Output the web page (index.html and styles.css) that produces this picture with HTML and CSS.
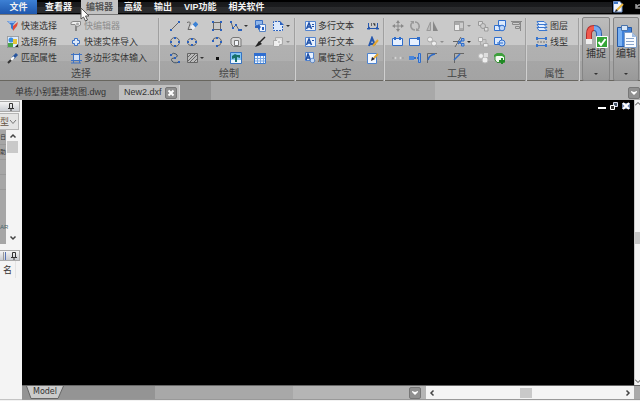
FILE: index.html
```html
<!DOCTYPE html>
<html lang="zh-CN">
<head>
<meta charset="utf-8">
<title>CAD</title>
<link rel="stylesheet" href="styles.css">
</head>
<body>
<nav class="menubar">
  <button class="menu file">文件</button>
  <button class="menu">查看器</button>
  <button class="menu current">编辑器</button>
  <button class="menu">高级</button>
  <button class="menu">输出</button>
  <button class="menu">VIP功能</button>
  <button class="menu">相关软件</button>
  <span class="quick">
    <button aria-label="编辑"><svg class="ic" viewBox="0 0 12 12"><path fill="#eef4ff" stroke="#6f8fc4" d="M1.500 .5H8L10 3V11H1.500z"/><path stroke="#3f78c8" stroke-width="2" d="M2 2H6"/><path stroke="#e9b53c" stroke-width="2" d="M11 3L5 9"/><path fill="#222" d="M4 8L6 10L3 11z"/></svg></button>
    <button aria-label="撤销"><svg class="ic" viewBox="0 0 12 12"><path fill="none" stroke="#999" stroke-width="1.500" d="M2 7Q4 3 8 4T11 9M2 3V7H6"/></svg></button>
  </span>
</nav>

<header class="ribbon">
  <section class="group">
    <div class="tools select">
      <button class="tool"><svg class="ic" viewBox="0 0 12 12"><path fill="#3a76cf" d="M0 1H9L6 5V10L4 8V5z"/><path fill="#8bb5ec" d="M1 1H8L7 3H2z"/><path fill="#e04a3a" d="M6 6L11 2L10 6L6 11z"/></svg>快速选择</button>
      <button class="tool off"><svg class="ic" viewBox="0 0 12 12"><path fill="#eee" stroke="#888" d="M1 2.500L3 1.500H10.500V5L7 7L5 4.500H1z"/><path stroke="#888" stroke-width="2" d="M6 6V11"/><circle cx="7.500" cy="4" r="1.500" fill="#aaa"/></svg>快编辑器</button>
      <button class="tool"><svg class="ic" viewBox="0 0 12 12"><path fill="#dcecff" stroke="#666" stroke-dasharray="1 1" d="M.5 .5H11.500V11.500H.5z"/><circle cx="4" cy="4" r="2.500" fill="#3b8de0"/><path fill="#4ca548" d="M1 7H6V11H1z"/><path fill="#e6c63c" d="M6 3H10V8H6z"/><path fill="#222" d="M8 11L11 8V11z"/></svg>选择所有</button>
      <button class="tool"><svg class="ic" viewBox="0 0 12 12"><path fill="#dbe8fa" stroke="#3e73c4" d="M4.500 4.500V2.500H7.500V4.500H9.500V7.500H7.500V9.500H4.500V7.500H2.500V4.500z"/></svg>快速实体导入</button>
      <button class="tool"><svg class="ic" viewBox="0 0 12 12"><path stroke="#27549d" stroke-width="3" d="M10 2L6 6"/><path stroke="#fff" stroke-width="2" d="M7 5L4 8"/><path stroke="#333" stroke-width="2" d="M4 8L1 11"/></svg>匹配属性</button>
      <button class="tool"><svg class="ic" viewBox="0 0 12 12"><path fill="#d5e3f7" stroke="#3e73c4" d="M3.500 2.500H9.500V8.500H3.500zM1 2.500H12M3.500 1V11M9.500 1V11M1 8.500H12M1 11H11"/></svg>多边形实体输入</button>
    </div>
    <h2>选择</h2>
  </section>

  <section class="group">
    <div class="tools draw">
      <button class="tool" aria-label="直线"><svg class="ic" viewBox="0 0 12 12"><path stroke="#666" d="M2 10L10 2"/><path fill="#2a61be" d="M1 9H3V11H1zM9 1H11V3H9z"/></svg></button>
      <button class="tool" aria-label="徒手画"><svg class="ic" viewBox="0 0 12 12"><path fill="none" stroke="#666" d="M1 2.500Q5 1 4 4T2 9.500H6"/><path stroke="#3b82d6" stroke-width="4" d="M11 3L8 6"/><path stroke="#eef0f5" stroke-width="4" d="M8 6L5.500 8.500"/></svg></button>
      <button class="tool" aria-label="矩形"><svg class="ic" viewBox="0 0 12 12"><path fill="none" stroke="#666" d="M2.500 2.500H9.500V9.500H2.500z"/><path fill="#2a61be" d="M1 1H3V3H1zM9 1H11V3H9zM1 9H3V11H1zM9 9H11V11H9z"/></svg></button>
      <button class="tool drop" aria-label="多段线"><svg class="ic" viewBox="0 0 12 12"><path fill="none" stroke="#666" d="M1 2L3 8L6 5L9 10H12"/><path fill="#2a61be" d="M0 1H2V3H0zM2 7H4V9H2zM5 4H7V6H5zM8 9H10V11H8zM10 9H12V11H10z"/></svg></button>
      <button class="tool" aria-label="块"><svg class="ic" viewBox="0 0 12 12"><path fill="#8fb6ea" stroke="#3b70c4" d="M1.500 .5H8.500V5.500H1.500z"/><path fill="#eef5ff" stroke="#5582c4" d="M5.500 4.500H11.500V11.500H5.500z"/><path fill="#2a61be" d="M1 6H4V4L7 7L4 10V8H1zM8 7H10V10H8z"/></svg></button>
      <button class="tool drop" aria-label="修剪框"><svg class="ic" viewBox="0 0 12 12"><path fill="#dce9fb" d="M1 2H9L11 5V11H1z"/><path fill="none" stroke="#2a61be" stroke-dasharray="2 1" d="M8 1.500H1.500V10.500H10.500V5"/><path fill="#2a61be" d="M8 1L12 5H8z"/></svg></button>

      <button class="tool" aria-label="圆"><svg class="ic" viewBox="0 0 12 12"><circle cx="6" cy="6" r="4.500" fill="none" stroke="#666"/><path fill="#2a61be" d="M5 1H7V3H5zM5 9H7V11H5zM1 5H3V7H1zM9 5H11V7H9z"/></svg></button>
      <button class="tool" aria-label="椭圆"><svg class="ic" viewBox="0 0 12 12"><ellipse cx="6" cy="6" rx="4.500" ry="3.500" fill="none" stroke="#666"/><path fill="#2a61be" d="M5 2H7V4H5zM5 8H7V10H5zM1 5H3V7H1zM9 5H11V7H9z"/></svg></button>
      <button class="tool" aria-label="圆弧"><svg class="ic" viewBox="0 0 12 12"><path fill="none" stroke="#666" d="M1.500 5.500Q2 1.500 6 1.500T10.500 6Q10 9.500 6 10"/><path fill="#2a61be" d="M1 4H3V6H1zM5 1H7V3H5zM9 5H11V7H9zM5 9H7V11H5z"/></svg></button>
      <button class="tool" aria-label="云线"><svg class="ic" viewBox="0 0 12 12"><path fill="#d8d8d8" stroke="#777" d="M1 5V3L3 1.500H9L11 3V10.500H3.500L1 8z"/><path fill="#f2f5fa" stroke="#777" d="M4.500 4.500H8.500V9.500H4.500z"/></svg></button>
      <button class="tool" aria-label="画刷"><svg class="ic" viewBox="0 0 12 12"><path stroke="#222" stroke-width="1.500" d="M11 1L5 7"/><path fill="#222" d="M5 5L8 8L4 10L1 11L3 8z"/></svg></button>
      <button class="tool drop off" aria-label="区域"><svg class="ic" viewBox="0 0 12 12"><path fill="#ddd" stroke="#aaa" d="M3.500 1.500H10.500V8.500H3.500z"/><path fill="#eee" stroke="#aaa" d="M1.500 4.500H7.500V10.500H1.500z"/><circle cx="7" cy="6" r="2" fill="#ccc" stroke="#fff"/></svg></button>

      <button class="tool" aria-label="样条曲线"><svg class="ic" viewBox="0 0 12 12"><path fill="none" stroke="#456" d="M2 3Q4 0 7 2T6 6Q1 6 3 9T10 10"/><path fill="#2a61be" d="M1 2H3V4H1zM5 5H7V7H5zM9 9H11V11H9z"/></svg></button>
      <button class="tool drop" aria-label="填充"><svg class="ic" viewBox="0 0 12 12"><path fill="#bbb" stroke="#666" d="M1.500 1.500H11.500V10.500H1.500z"/><path stroke="#666" d="M2 5L5 2M2 9L9 2M4 10L11 3M8 10L11 7"/></svg></button>
      <button class="tool" aria-label="点"><svg class="ic" viewBox="0 0 12 12"><path fill="#111" d="M5 5H8V8H5z"/></svg></button>
      <button class="tool" aria-label="图像"><svg class="ic" viewBox="0 0 12 12"><path fill="#84c5f3" stroke="#3673c2" d="M.5 .5H11.500V11.500H.5z"/><path fill="#eaf7ff" d="M1 8H11V11H1z"/><path fill="#15706a" d="M2 4L5 2L7 3L10 3L10 6L7 5V10H5V6L2 7z"/></svg></button>
      <button class="tool" aria-label="表格"><svg class="ic" viewBox="0 0 12 12"><path fill="#f0f7ff" stroke="#3c7bd0" d="M.5 1.500H11.500V11.500H.5z"/><path fill="#2f6ed0" d="M0 1H12V4H0z"/><path stroke="#79a7e4" d="M3.500 4V11M6.500 4V11M9.500 4V11M1 6.500H11M1 9H11"/></svg></button>
    </div>
    <h2>绘制</h2>
  </section>

  <section class="group">
    <div class="tools text">
      <button class="tool"><svg class="ic" viewBox="0 0 12 12"><path fill="#e9f1fd" stroke="#5585cf" d="M1.500 1.500H11.500V10.500H1.500z"/><path fill="none" stroke="#1d4fa8" stroke-width="1.500" d="M2.500 9L5 3L7.500 9M3.500 7H7"/><path stroke="#1d4fa8" d="M8 4.500H10M8 6.500H10"/></svg>多行文本</button>
      <button class="tool" aria-label="标注"><svg class="ic" viewBox="0 0 12 12"><path stroke="#2456ad" d="M1.500 3V9M10.500 3V9M0 8.500H12"/><path fill="#2456ad" d="M0 9.500L3 6.500V9.500zM12 9.500L9 6.500V9.500z"/><path stroke="#666" d="M4.500 3V6M6 3.500H8V6"/></svg></button>
      <button class="tool"><svg class="ic" viewBox="0 0 12 12"><path fill="#e9f1fd" stroke="#5585cf" d="M1.500 1.500H11.500V10.500H1.500z"/><path fill="none" stroke="#1d4fa8" stroke-width="1.500" d="M2.500 9L5 3L7.500 9M3.500 7H7"/><path stroke="#1d4fa8" d="M8 4.500H10"/></svg>单行文本</button>
      <button class="tool" aria-label="文字样式"><svg class="ic" viewBox="0 0 12 12"><path fill="none" stroke="#2456ad" stroke-width="2" d="M2 10L5 2L8 9M2 8H7"/><path stroke="#e4a52e" stroke-width="2" d="M11 4L6 10"/></svg></button>
      <button class="tool"><svg class="ic" viewBox="0 0 12 12"><path fill="#e9f1fd" stroke="#5585cf" d="M1.500 .5H9.500V8.500H1.500z"/><path fill="none" stroke="#1d4fa8" stroke-width="1.500" d="M2 8L4 2L6.500 8M3 6H6"/><circle cx="8.500" cy="8.500" r="2.200" fill="#c5daf6" stroke="#2f66bb" stroke-dasharray="1 .5"/></svg>属性定义</button>
      <button class="tool" aria-label="编辑文字"><svg class="ic" viewBox="0 0 12 12"><path fill="#f3f8ff" stroke="#4d83d0" d="M.5 1.500H9.500V11.500H.5z"/><path stroke="#e4a52e" stroke-width="2" d="M11 2L7 6"/><path fill="#223" d="M5 5L8 7L4 9z"/></svg></button>
    </div>
    <h2>文字</h2>
  </section>

  <section class="group">
    <div class="tools modify">
      <button class="tool" aria-label="移动"><svg class="ic" viewBox="0 0 12 12"><path stroke="#888" d="M6 2V10M2 6H10"/><path fill="#888" d="M6 0L8 3H4zM6 12L8 9H4zM0 6L3 4V8zM12 6L9 4V8z"/></svg></button>
      <button class="tool" aria-label="旋转"><svg class="ic" viewBox="0 0 12 12"><path fill="none" stroke="#999" stroke-width="1.500" d="M4 2Q1 4 2 7T6 10M8 10Q11 8 10 5T6 2"/><path fill="#999" d="M1 1H5V4zM11 11H7V8z"/></svg></button>
      <button class="tool" aria-label="镜像"><svg class="ic" viewBox="0 0 12 12"><path fill="#bbb" stroke="#999" d="M4.500 2V10.500H.8z"/><path fill="#888" d="M7 1L12 11H7z"/></svg></button>
      <button class="tool drop off" aria-label="缩放"><svg class="ic" viewBox="0 0 12 12"><path fill="#aaa" stroke="#999" d="M1.500 1.500H10.500V10.500H1.500z"/><path fill="#eee" d="M2 5H6V10H2z"/><path fill="#ccc" d="M7 3H10V8H7z"/></svg></button>
      <button class="tool" aria-label="分解"><svg class="ic" viewBox="0 0 12 12"><path fill="#ddd" stroke="#999" d="M1.500 1.500H5.500V5.500H1.500zM7.500 7.500H11V11H7.500z"/><circle cx="6" cy="6" r="2.500" fill="#ccc" stroke="#999"/></svg></button>
      <button class="tool" aria-label="组合"><svg class="ic" viewBox="0 0 12 12"><path fill="#dceafd" stroke="#2f6fce" d="M4.500 .5H11.500V6.500H4.500zM.5 5.500H6.500V10.500H.5z"/><circle cx="8" cy="8" r="2.800" fill="#bfd7f8" stroke="#2f6fce"/></svg></button>
      <button class="tool" aria-label="对齐"><svg class="ic" viewBox="0 0 12 12"><path fill="#ccc" stroke="#888" d="M1.500 2.500H8.500V4.500H1.500zM4.500 6.500H8.500V8.500H4.500z"/><path stroke="#888" d="M0 1.500H11M9.500 1V11"/></svg></button>

      <button class="tool" aria-label="打断"><svg class="ic" viewBox="0 0 12 12"><path fill="#e6f0ff" stroke="#2e6cca" d="M.5 2.500H10.500V9.500H.5z"/><path fill="#2e6cca" d="M2 1H4V4H2zM7 1H9V4H7z"/></svg></button>
      <button class="tool" aria-label="打断于点"><svg class="ic" viewBox="0 0 12 12"><path fill="#e6f0ff" stroke="#2e6cca" d="M.5 2.500H10.500V9.500H.5z"/><path fill="#2e6cca" d="M8 1H11V4H8z"/></svg></button>
      <button class="tool drop off" aria-label="复制"><svg class="ic" viewBox="0 0 12 12"><circle cx="4" cy="3.500" r="2.500" fill="#eee" stroke="#aaa"/><circle cx="8" cy="7.500" r="2.500" fill="#eee" stroke="#aaa"/><path stroke="#aaa" d="M9 9L12 12"/></svg></button>
      <button class="tool drop" aria-label="修剪"><svg class="ic" viewBox="0 0 12 12"><path stroke="#666" d="M2 11L8 1M0 5.500H5"/><path stroke="#2e6cca" stroke-width="1.500" d="M5 5L10 9M10 3L5 8"/><path fill="#8fb5ea" stroke="#2e6cca" d="M8.500 2.500H11V5H8.500zM8.500 7.500H11V10H8.500z"/></svg></button>
      <button class="tool" aria-label="阵列"><svg class="ic" viewBox="0 0 12 12"><path fill="#eee" stroke="#aaa" d="M1.500 1.500H5.500V5.500H1.500zM6.500 7.500H11V11H6.500z"/><path stroke="#aaa" fill="none" d="M6 3.500H9V7M3.500 6V9H6"/></svg></button>
      <button class="tool" aria-label="取消组合"><svg class="ic" viewBox="0 0 12 12"><path fill="#dceafd" stroke="#2f6fce" d="M.5 1.500H7.500V8.500H.5z"/><circle cx="8" cy="7" r="3" fill="#c6dbf8" stroke="#2f6fce"/><path stroke="#2f6fce" d="M3 7H9"/></svg></button>
      <span></span>

      <button class="tool" aria-label="合并"><svg class="ic" viewBox="0 0 12 12"><path stroke="#999" d="M0 6H3M9 6H12"/><path fill="#eee" stroke="#bbb" d="M2.500 5H4.500V7H2.500zM7.500 5H9.500V7H7.500z"/></svg></button>
      <button class="tool" aria-label="延伸"><svg class="ic" viewBox="0 0 12 12"><path fill="#86b3ee" stroke="#2e6cca" d="M9.500 1.500H11.500V10.500H9.500z"/><path fill="#4a86d9" d="M0 4H5V8H0z"/><path stroke="#2e6cca" stroke-width="2" stroke-dasharray="2 1" d="M5 6H9"/></svg></button>
      <button class="tool" aria-label="圆角"><svg class="ic" viewBox="0 0 12 12"><path fill="none" stroke="#666" d="M1.500 11V1.500H11"/><path fill="none" stroke="#2e6cca" stroke-width="1.500" d="M2 8Q3 3 9 2"/></svg></button>
      <button class="tool" aria-label="倒角"><svg class="ic" viewBox="0 0 12 12"><path fill="none" stroke="#666" d="M1.500 11V1.500H11"/><path stroke="#2e6cca" stroke-width="1.500" d="M1 8L7 2"/></svg></button>
      <button class="tool" aria-label="偏移"><svg class="ic" viewBox="0 0 12 12"><circle cx="4" cy="4" r="2.500" fill="#eee" stroke="#bbb"/><circle cx="8" cy="8" r="3" fill="#eee" stroke="#bbb"/><path fill="#ddd" d="M7 1H11V5H7z"/></svg></button>
      <button class="tool" aria-label="添加"><svg class="ic" viewBox="0 0 12 12"><path fill="#f2faf1" stroke="#398f37" d="M1 3.500L3 1.500H8L10.500 4V10.500H3L1 8z"/><path fill="#3e9f3c" d="M0 3L3 1H8L11 4V6L8 4H3L0 5z"/><path stroke="#208a25" stroke-width="2" d="M8 6V12M5 9H11"/></svg></button>
    </div>
    <h2>工具</h2>
  </section>

  <section class="group">
    <div class="tools props">
      <button class="tool"><svg class="ic" viewBox="0 0 12 12"><path fill="#e5effe" stroke="#3976cf" d="M1 7.500H8L11 10.500H3zM1 4.500H8L11 7.500H3zM1 1.500H8L11 4.500H3z"/></svg>图层</button>
      <button class="tool"><svg class="ic" viewBox="0 0 12 12"><path stroke="#3976cf" d="M2 2.500H10M2 9.500H10"/><path stroke="#777" stroke-dasharray="2 1" d="M1 6H11"/><path fill="#3976cf" d="M0 1H2V4H0zM9 1H11V4H9zM0 8H2V11H0zM9 8H11V11H9z"/></svg>线型</button>
    </div>
    <h2>属性</h2>
  </section>

  <button class="big">
    <svg class="bigic" viewBox="0 0 24 24"><path fill="none" stroke="#b42c2c" stroke-width="6" d="M5 18V10Q5 4 10 4"/><path fill="none" stroke="#f05a4e" stroke-width="4" d="M5 18V10Q5 4 10 4"/><path fill="none" stroke="#315fa6" stroke-width="6" d="M10 4Q15 4 15 10V18"/><path fill="none" stroke="#78aaf0" stroke-width="4" d="M10 4Q15 4 15 10V18"/><path fill="#eee" d="M2 15H8V20H2z"/><path fill="#35a537" stroke="#fff" d="M12.500 12.500H23.500V23.500H12.500z"/><path fill="none" stroke="#fff" stroke-width="2" d="M14.500 18L17 21L21.500 15"/></svg>
    <span>捕捉</span><i class="caret"></i>
  </button>
  <button class="big">
    <svg class="bigic" viewBox="0 0 24 24"><path fill="#3f80d8" stroke="#2558a5" d="M3.500 3.500H17.500V22.500H3.500z"/><path fill="#78b0f2" d="M4 4H8V22H4z"/><path fill="#d8e6f7" stroke="#4973aa" d="M7.500 1.500H13.500V6.500H7.500z"/><path fill="#f8fbff" stroke="#7d9dc8" d="M10.500 8.500H18L22.500 13V23.500H10.500z"/><path fill="#9dbbe2" d="M18 9V13H22z"/><path stroke="#8aa5cb" d="M12 14.500H20M12 17.500H20M12 20.500H20"/></svg>
    <span>编辑</span><i class="caret"></i>
  </button>
</header>

<div class="tabs">
  <a class="tab" href="#a">单栋小别墅建筑图.dwg</a>
  <span class="tab open"><a href="#b">New2.dxf</a><button class="close" aria-label="关闭"><svg viewBox="0 0 8 8"><path stroke="#fff" stroke-width="2" d="M1.500 1.500L6.500 6.500M6.500 1.500L1.500 6.500"/></svg></button></span>
  <button class="more" aria-label="更多"><svg viewBox="0 0 8 8"><path fill="#fff" d="M1 2L4 3L7 2V3L4 6L1 3z"/></svg></button>
</div>

<main class="work">
  <aside class="side">
    <div class="head"><svg viewBox="0 0 8 8"><path fill="none" stroke="#333" d="M2.500 5V.5H5.500V5M1 5.500H7M4 5V8"/></svg></div>
    <label class="combo"><select aria-label="类型"><option>型</option></select><svg viewBox="0 0 8 8"><path fill="none" stroke="#777" d="M1 2L4 5.500L7 2"/></svg></label>
    <div class="list">
      <div class="items"><span>日</span><span>助</span><span></span><span></span><span class="last">AR</span></div>
      <div class="vbar"><svg viewBox="0 0 8 8"><path fill="none" stroke="#444" stroke-width="1.500" d="M1.500 5.500L4 3L6.500 5.500"/></svg><i></i><svg viewBox="0 0 8 8"><path fill="none" stroke="#444" stroke-width="1.500" d="M1.500 2.500L4 5L6.500 2.500"/></svg></div>
    </div>
    <div class="head second"><span></span><svg viewBox="0 0 8 8"><path fill="none" stroke="#333" d="M2.500 5V.5H5.500V5M1 5.500H7M4 5V8"/></svg></div>
    <div class="column">名</div>
  </aside>
  <section class="view">
    <div class="canvas">
      <div class="winctl">
        <button aria-label="最小化"><svg viewBox="0 0 8 8"><path fill="#fff" d="M0 5H8V7H0z"/></svg></button>
        <button aria-label="还原"><svg viewBox="0 0 8 8"><path fill="#456" stroke="#dde" d="M3.500 .5H7.500V4.500H3.500z"/><path fill="#333" stroke="#fff" d="M.5 3.500H4.500V7.500H.5z"/></svg></button>
        <button aria-label="关闭窗口"><svg viewBox="0 0 8 8"><path fill="#6b82aa" d="M0 1H8V7H0z"/><path stroke="#fff" stroke-width="2" d="M1 1L7 7M7 1L1 7"/></svg></button>
      </div>
    </div>
    <div class="vscroll"><svg viewBox="0 0 8 8"><path fill="none" stroke="#444" d="M1 5.500L4 2.500L7 5.500"/></svg><i></i><svg viewBox="0 0 8 8"><path fill="none" stroke="#444" d="M1 2.500L4 5.500L7 2.500"/></svg></div>
    <div class="foot">
      <div class="sheets">
        <button class="model"><svg viewBox="0 0 38 13" preserveAspectRatio="none"><path fill="#cbcbcb" stroke="#666" d="M.5 0L5 12.500H32L37.500 0"/></svg><span>Model</span></button>
        <button class="more" aria-label="更多布局"><svg viewBox="0 0 8 8"><path fill="#fff" d="M1 2L4 3L7 2V3L4 6L1 3z"/></svg></button>
      </div>
      <div class="hscroll"><svg viewBox="0 0 8 8"><path fill="none" stroke="#444" stroke-width="1.500" d="M5.500 1.500L3 4L5.500 6.500"/></svg><i></i><svg viewBox="0 0 8 8"><path fill="none" stroke="#444" stroke-width="1.500" d="M2.500 1.500L5 4L2.500 6.500"/></svg></div>
    </div>
  </section>
</main>
<svg class="pointer" viewBox="0 0 10 15"><path fill="#fff" stroke="#555" d="M1 1V12L3.500 10L5.500 14L7.500 13L5.500 9H9z"/></svg>
</body>
</html>
```

FILE: styles.css
```css
* {
  box-sizing: border-box;
}

body {
  margin: 0;
  height: 100vh;
  display: flex;
  flex-direction: column;
  overflow: hidden;
  background: #f2f2f2;
  color: #333;
  font: 9px/12px "Liberation Sans", "Noto Sans CJK SC", sans-serif;
}

button {
  margin: 0;
  padding: 0;
  border: 0;
  background: none;
  color: inherit;
  font: inherit;
}

a {
  color: inherit;
  text-decoration: none;
}

svg {
  display: block;
  flex: none;
  width: 8px;
  height: 8px;
}

.ic {
  width: 12px;
  height: 12px;
}

/* Menu bar */
.menubar {
  flex: none;
  display: flex;
  height: 14px;
  background: linear-gradient(#000 2px, #18191b 2px, #1c1d1f 7px, #2b2c2e 7px, #292a2c 13px, #000 13px);
  color: #f2f2f2;
  font-weight: bold;
}

.menu {
  padding: 0 6px 1px;
  white-space: nowrap;
}

.menu.file {
  width: 37px;
  margin-right: 2px;
  background: linear-gradient(#3d80d4, #1e57ad);
}

.menu.current {
  padding: 0 5px 1px;
  margin-left: 3px;
  background: #c3c3c3;
  color: #555;
}

.quick {
  display: flex;
  gap: 10px;
  margin-left: auto;
  margin-right: -6px;
  background: #000;
}

/* Ribbon */
.ribbon {
  flex: none;
  display: grid;
  grid-template-columns: 160fr 136fr 89fr 142fr 53fr 31fr 29fr;
  height: 67px;
  padding-top: 3px;
  border-top: 1px solid #777;
  border-bottom: 1px solid #68665f;
  background: linear-gradient(#c9c9c9 30px, #b1b1b1 30px, #afafaf 46px, #a6a6a6 46px, #a3a3a3);
}

.group {
  border-right: 1px solid #cfcfcf;
  box-shadow: inset -1px 0 #a0a0a0;
}

.group h2 {
  margin: 0;
  padding-left: 3px;
  font-size: 10px;
  line-height: 15px;
  font-weight: normal;
  text-align: center;
  color: #444;
}

.tools {
  display: grid;
  grid-template-rows: repeat(3, 16px);
}

.select {
  grid-template-columns: 63px 1fr;
  padding-left: 7px;
}

.draw {
  grid-template-columns: 17px 25px 19px 24px 18px 18px;
  padding-left: 9px;
}

.text {
  grid-template-columns: 63px 12px;
  padding-left: 8px;
}

.modify {
  grid-template-columns: 17px 17px 27px 24px 17px 17px 12px;
  padding-left: 7px;
}

.props {
  padding-left: 9px;
}

.tool {
  display: flex;
  align-items: center;
  gap: 2px;
  white-space: nowrap;
}

.tool.off {
  color: #8d8d8d;
}

.tool.drop::after,
.caret {
  content: "";
  flex: none;
  border: 2px solid transparent;
  border-top-color: currentColor;
  border-bottom: 0;
}

.big {
  display: flex;
  flex-direction: column;
  align-items: center;
  margin: -1px 1px 0 2px;
  padding: 6px 0 3px;
  border: 1px solid #858585;
  border-radius: 2px;
  background: linear-gradient(#bcbcbc, #999);
  font-size: 10px;
}

.bigic {
  width: 24px;
  height: 24px;
}

.caret {
  margin: auto 0 2px;
}

/* Document tabs */
.tabs {
  flex: none;
  display: flex;
  align-items: flex-end;
  height: 19px;
  padding-left: 15px;
  background: linear-gradient(90deg, #939393 33%, #a8a8a8 33%, #a8a8a8 68%, #b7b7b7 68%);
}

.tab {
  padding-right: 13px;
  line-height: 15px;
}

.tab.open {
  display: flex;
  align-items: center;
  gap: 3px;
  height: 15px;
  padding: 0 2px 0 5px;
  border-right: 1px solid #d5d5d5;
  background: #c0c0c0;
}

.close,
.more {
  display: grid;
  place-items: center;
  width: 12px;
  height: 12px;
  border: 1px solid #777;
  border-radius: 2px;
  background: #909090;
}

.tabs .more {
  margin: 0 0 1px auto;
}

/* Work area */
.work {
  flex: 1;
  display: flex;
  min-height: 0;
  margin-bottom: 1px;
}

.side {
  flex: none;
  width: 22px;
  padding: 1px 2px 0 0;
  border-bottom: 1px solid #c4c4c4;
  background: #f4f4f4;
}

.head {
  display: flex;
  align-items: center;
  justify-content: flex-end;
  gap: 4px;
  height: 11px;
  padding-right: 4px;
  border: 1px solid #aaa;
  border-left: 0;
  background: linear-gradient(#f4f4f4, #c9ccd2);
}

.head.second {
  margin-top: 6px;
  padding-right: 1px;
}

.head.second span {
  width: 3px;
  height: 8px;
  border-right: 1px solid #5874b5;
  border-left: 1px solid #999;
}

.combo {
  display: flex;
  align-items: center;
  height: 17px;
  margin: 1px 1px 0 0;
  border: 1px solid #b5b5b5;
  border-left: 0;
  background: #e4e4e4;
}

.combo select {
  width: 9px;
  margin: 0;
  padding: 0;
  border: 0;
  appearance: none;
  background: none;
  color: #654;
  font: inherit;
}

.list {
  display: flex;
  height: 114px;
}

.items {
  width: 6px;
  background: #a6a6a6;
  font-size: 6px;
}

.items span {
  display: block;
  height: 15px;
  border-bottom: 1px solid #999;
  line-height: 15px;
}

.items .last {
  height: 54px;
  border: 0;
  line-height: 74px;
  color: #47656a;
}

.vbar {
  display: flex;
  flex-direction: column;
  align-items: center;
  width: 13px;
  padding: 2px 0;
}

.vbar i {
  width: 11px;
  height: 12px;
  margin: 1px 0 auto;
  background: #c9c9c9;
}

.column {
  width: 16px;
  padding-top: 2px;
  border-right: 1px solid #e4e4e4;
  text-align: center;
  line-height: 15px;
}

.view {
  flex: 1;
  display: grid;
  grid-template: 1fr 15px / 1fr 6px;
  min-width: 0;
}

.canvas {
  background: #000;
}

.winctl {
  display: flex;
  justify-content: flex-end;
  gap: 4px;
  padding: 2px 4px;
}

.vscroll,
.hscroll {
  display: flex;
  align-items: center;
  justify-content: space-between;
  background: #f4f4f4;
}

.vscroll {
  flex-direction: column;
  overflow: hidden;
  border-left: 1px solid #ccc;
}

.vscroll i {
  width: 6px;
  height: 12px;
  margin-bottom: 10px;
  background: #c8c8c8;
}

.foot {
  grid-column: 1 / 3;
  display: flex;
  padding-right: 6px;
  border-top: 1px solid #666;
  border-bottom: 1px solid #999;
  background: #aaa;
}

.sheets {
  flex: 1;
  display: flex;
  align-items: flex-start;
  padding: 0 5px 0 4px;
  background: linear-gradient(90deg, #949494 33%, #a8a8a8 33%, #a8a8a8 67%, #b5b5b5 67%);
}

.sheets .more {
  margin: 1px 0 0 auto;
}

.model {
  display: grid;
  width: 38px;
  height: 13px;
  font-family: "DejaVu Sans", sans-serif;
  font-size: 8px;
}

.model > * {
  grid-area: 1 / 1;
}

.model svg {
  width: 38px;
  height: 13px;
}

.hscroll {
  width: 34%;
  padding: 0 2px;
}

.hscroll i {
  width: 12px;
  height: 10px;
  margin-right: 7px;
  background: #c9c9c9;
}

/* Mouse pointer lying over the menu */
.pointer {
  position: absolute;
  left: 80px;
  top: 7px;
  width: 10px;
  height: 15px;
}
```
